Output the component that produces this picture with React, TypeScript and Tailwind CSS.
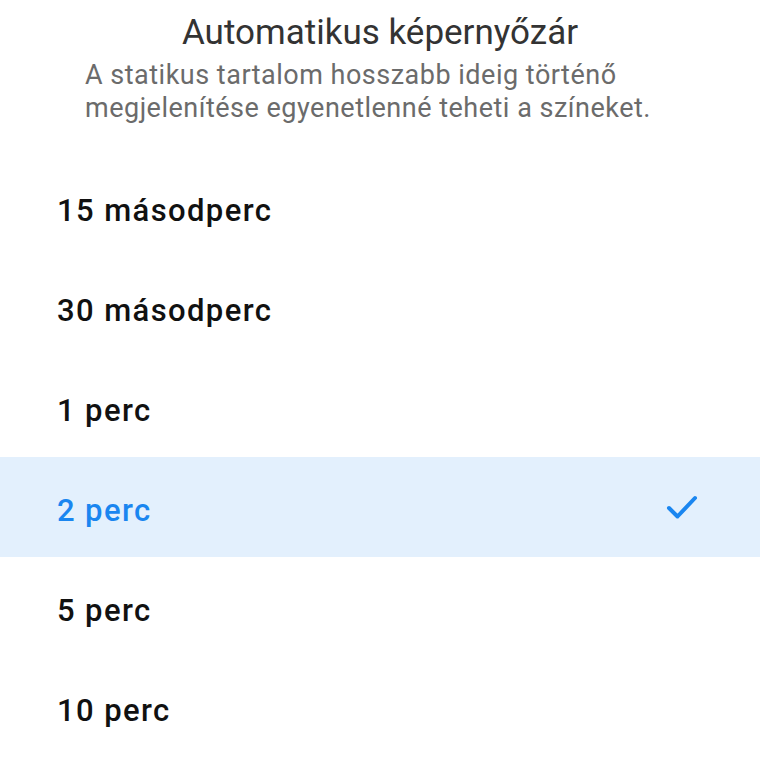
import React from 'react';

const options = ['15 másodperc', '30 másodperc', '1 perc', '2 perc', '5 perc', '10 perc'];
const selected = '2 perc';

const Check = () => (
  <svg width="34" height="28" viewBox="0 0 34 28" fill="none">
    <path d="M5 15 L13.5 23.5 L31 5" stroke="#1a86f0" strokeWidth="4" strokeLinecap="round" strokeLinejoin="round" />
  </svg>
);

const App = () => {
  return (
    <div className="w-[760px] h-[760px] overflow-hidden bg-white font-['Roboto',sans-serif]">
      <h1 className="pt-[13px] text-center text-[35px] leading-[40px] font-normal text-[#333333]">
        Automatikus képernyőzár
      </h1>
      <p className="mt-[6px] px-[85px] text-[27px] leading-[33px] tracking-[0.5px] text-[#6b6b6b]">
        A statikus tartalom hosszabb ideig történő megjelenítése egyenetlenné teheti a színeket.
      </p>
      <ul className="mt-[32px]">
        {options.map((o) => {
          const active = o === selected;
          return (
            <li
              key={o}
              className={
                active
                  ? 'flex h-[100px] items-center justify-between bg-[#e3f0fd] pl-[57px] pr-[62px]'
                  : 'flex h-[100px] items-center justify-between pl-[57px] pr-[62px]'
              }
            >
              <span
                className={
                  active
                    ? 'pt-[8px] text-[31px] tracking-[1.4px] font-medium text-[#1a86f0]'
                    : 'pt-[8px] text-[31px] tracking-[1.4px] font-medium text-[#111111]'
                }
              >
                {o}
              </span>
              {active && <Check />}
            </li>
          );
        })}
      </ul>
    </div>
  );
};

export default App;
